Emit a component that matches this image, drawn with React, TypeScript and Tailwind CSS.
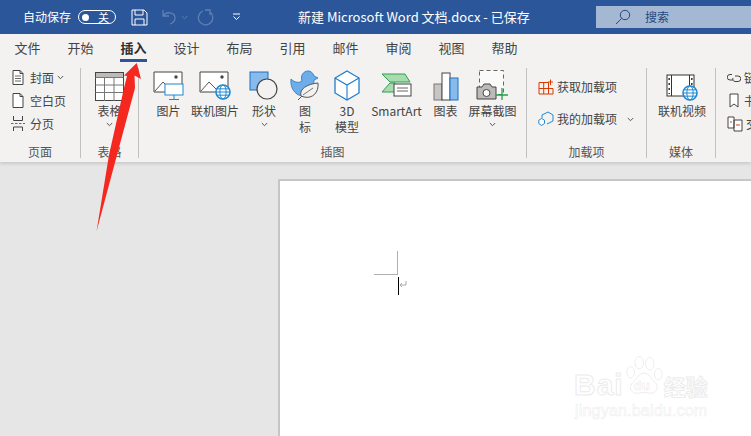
import React from "react";

const font = "[font-family:'Noto_Sans_CJK_SC','Noto_Sans',sans-serif]";

const Chevron = ({ className = "" }: { className?: string }) => (
  <svg width="7" height="5" viewBox="0 0 7 5" className={className}>
    <path d="M0.8 1 L3.5 3.7 L6.2 1" fill="none" stroke="#555" strokeWidth="1" />
  </svg>
);

const Globe = ({ x, y, r }: { x: number; y: number; r: number }) => (
  <g fill="none" stroke="#1e88d2" strokeWidth="1">
    <circle cx={x} cy={y} r={r} fill="#fff" strokeWidth="1.6" />
    <ellipse cx={x} cy={y} rx={r * 0.45} ry={r} />
    <path d={`M${x - r} ${y}H${x + r}M${x - r * 0.85} ${y - r * 0.45}H${x + r * 0.85}M${x - r * 0.85} ${y + r * 0.45}H${x + r * 0.85}`} />
  </g>
);

const Pic = ({ online }: { online?: boolean }) => (
  <svg width="32" height="30" viewBox="0 0 32 30">
    <path d="M1 1H29V21H1Z" fill="#fff" stroke="#444" />
    <path d="M2 20L10 11L17 18" fill="none" stroke="#555" />
    <circle cx="23" cy="6" r="1.7" fill="#444" />
    {online ? (
      <Globe x={24} y={21} r={7} />
    ) : (
      <g>
        <rect x="12" y="13" width="18" height="11" fill="#fff" stroke="#1e88d2" />
        <path d="M21 24V28M16 28.5H26" stroke="#1e88d2" />
      </g>
    )}
  </svg>
);

const Shapes = () => (
  <svg width="30" height="30" viewBox="0 0 30 30">
    <rect x="1" y="1" width="18" height="18" fill="#86bbeb" stroke="#1f6fc0" />
    <circle cx="18" cy="18" r="10" fill="#f3f2f1" stroke="#444" strokeWidth="1.2" />
  </svg>
);

const IconArt = () => (
  <svg width="30" height="31" viewBox="0 0 30 31">
    <path d="M1 9C5 13 9 13 12 11C10 5 14 1 18 1C21 1 23 3 24 6L28 8L24 10C24 14 23 16 21 18L12 26C5 25 0 18 1 9Z" fill="#6cadea" stroke="#3a86cc" />
    <path d="M8 30L15 23" stroke="#555" fill="none" />
    <path d="M11 26C9 19 17 14 28 13C29 22 23 29 14 27Z" fill="#f3f2f1" stroke="#555" />
    <path d="M13 25L23 18" stroke="#777" fill="none" />
  </svg>
);

const Cube = () => (
  <svg width="28" height="31" viewBox="0 0 28 31">
    <path d="M14 1L26 8V23L14 30L2 23V8Z" fill="#fff" stroke="#1e7ccb" strokeWidth="1.3" />
    <path d="M2 8L14 15L26 8M14 15V30" fill="none" stroke="#1e7ccb" strokeWidth="1.1" />
  </svg>
);

const SmartArtIcon = () => (
  <svg width="32" height="28" viewBox="0 0 32 28">
    <path d="M1 1H24L29 9H9Z" fill="#a8dcae" stroke="#2f9e52" />
    <path d="M9 10L1 19H14V10Z" fill="#a8dcae" stroke="#2f9e52" />
    <rect x="13" y="11" width="17" height="12" fill="#fff" stroke="#444" />
    <path d="M16 15H27M16 18H27" stroke="#666" />
  </svg>
);

const ChartIcon = () => (
  <svg width="26" height="29" viewBox="0 0 26 29">
    <rect x="1" y="12" width="8" height="16" fill="#c8c6c4" stroke="#777" />
    <rect x="9" y="1" width="8" height="27" fill="#fff" stroke="#444" />
    <rect x="17" y="6" width="8" height="22" fill="#86bbeb" stroke="#1f6fc0" />
  </svg>
);

const Screenshot = () => (
  <svg width="34" height="31" viewBox="0 0 34 31">
    <rect x="3.5" y="0.5" width="24" height="24" fill="#fafafa" stroke="#666" strokeDasharray="4 3" />
    <path d="M1 17H6L8 14H14L16 17H20V29H1Z" fill="#bdbbb9" stroke="#444" />
    <circle cx="10.5" cy="23" r="3.5" fill="#fff" stroke="#444" />
    <path d="M26 18V30M20 25H32" stroke="#22a04a" strokeWidth="1.3" />
  </svg>
);

const TableIcon = () => (
  <svg width="29" height="29" viewBox="0 0 29 29">
    <rect x="0.5" y="0.5" width="28" height="28" fill="#fff" stroke="#444" />
    <rect x="1" y="1" width="27" height="4" fill="#bdbbb9" />
    <path d="M0.5 5.5H28.5M0.5 13H28.5M0.5 20.5H28.5M9.5 5V29M19 5V29" stroke="#777" fill="none" />
  </svg>
);

const VideoIcon = () => (
  <svg width="32" height="27" viewBox="0 0 32 27">
    <rect x="1" y="1" width="27" height="21" fill="#fff" stroke="#333" />
    <path d="M5.5 1V22M23.5 1V22" stroke="#333" />
    <path d="M3.2 4V6M3.2 9V11M3.2 14V16M3.2 19V20M25.8 4V6M25.8 9V11" stroke="#333" strokeWidth="1.5" />
    <Globe x={24} y={19} r={7} />
  </svg>
);

const SmallPage = ({ lines }: { lines?: boolean }) => (
  <svg width="12" height="15" viewBox="0 0 12 15">
    <path d="M1 .5H8L11 3.5V14.5H1Z" fill="#fff" stroke="#444" />
    <path d="M8 .5V3.5H11" fill="none" stroke="#444" />
    {lines && <path d="M3 6H9M3 8.5H9M3 11H9" stroke="#666" />}
  </svg>
);

const BreakIcon = () => (
  <svg width="14" height="15" viewBox="0 0 14 15">
    <path d="M2.5 0V4.5H11.5V0M2.5 15V11H11.5V15" fill="none" stroke="#444" />
    <path d="M0 7.5H14" stroke="#1e7ccb" strokeDasharray="2.5 1.5" />
  </svg>
);

const Big = ({ w, icon, label, chevron }: { w: number; icon: React.ReactNode; label: React.ReactNode; chevron?: boolean }) => (
  <div className="flex shrink-0 flex-col items-center" style={{ width: w }}>
    <div className="flex h-[33px] items-end justify-center">{icon}</div>
    <div className="mt-[2px] text-center text-[12px] leading-[16px] whitespace-nowrap">{label}</div>
    {chevron && <Chevron className="mt-[3px]" />}
  </div>
);

const Group = ({ w, label, children, last, className = "" }: { w: number; label: string; children: React.ReactNode; last?: boolean; className?: string }) => (
  <div className={`relative flex h-[90px] shrink-0 flex-col ${last ? "" : "border-r border-[#c2c1c0]"}`} style={{ width: w }}>
    <div className={`flex flex-1 ${className}`}>{children}</div>
    <div className="h-[14px] text-center text-[12px] leading-[15px] text-[#555]">{label}</div>
  </div>
);

const Small = ({ icon, label, chevron }: { icon: React.ReactNode; label: string; chevron?: boolean }) => (
  <div className="flex h-[23px] items-center whitespace-nowrap">
    <div className="flex w-[18px] justify-center">{icon}</div>
    <span className="ml-[3px] text-[12px]">{label}</span>
    {chevron && <Chevron className="ml-[3px]" />}
  </div>
);

const tabs = ["文件", "开始", "插入", "设计", "布局", "引用", "邮件", "审阅", "视图", "帮助"];

export default function App() {
  return (
    <div className={`relative h-[436px] w-[751px] overflow-hidden bg-[#e6e6e6] text-[#444] ${font}`}>
      {/* Title bar */}
      <div className="flex h-[34px] items-center bg-[#2b579a] pl-[23px] text-white">
        <span className="w-[48px] text-[12px] whitespace-nowrap">自动保存</span>
        <div className="ml-[7px] flex h-[14px] w-[38px] items-center rounded-full border border-white pl-[3px]">
          <span className="h-[7px] w-[7px] rounded-full bg-white" />
          <span className="ml-[9px] text-[11px] leading-none">关</span>
        </div>
        <svg width="17" height="17" viewBox="0 0 17 17" className="ml-[15px]">
          <path d="M1 1H13L16 4V16H1Z M4 1V6H12V1 M4 16V10H13V16" fill="none" stroke="#fff" />
        </svg>
        <svg width="16" height="16" viewBox="0 0 16 16" className="ml-[13px]">
          <path d="M2 1V7H8M2 7C5 2 14 3 14 9C14 12 12 14 9 15" fill="none" stroke="#5f80b4" strokeWidth="1.3" />
        </svg>
        <svg width="7" height="5" viewBox="0 0 7 5" className="ml-[4px]">
          <path d="M.8 1L3.5 3.7L6.2 1" fill="none" stroke="#5f80b4" />
        </svg>
        <svg width="17" height="17" viewBox="0 0 17 17" className="ml-[9px]">
          <path d="M6 2A7.2 7.2 0 1 0 13 3M8 1H13V6" fill="none" stroke="#5f80b4" strokeWidth="1.3" />
        </svg>
        <svg width="9" height="8" viewBox="0 0 9 8" className="ml-[18px]">
          <path d="M1 1H8M1.5 3.5L4.5 6.5L7.5 3.5" fill="none" stroke="#fff" />
        </svg>
        <span className="ml-[57px] w-[240px] text-[13px] whitespace-nowrap">新建 Microsoft Word 文档.docx - 已保存</span>
        <div className="ml-[58px] flex h-[22px] flex-1 items-center bg-[#a5b8d3] pl-[19px] text-[#23497f]">
          <svg width="16" height="16" viewBox="0 0 16 16">
            <circle cx="10" cy="6" r="4.7" fill="none" stroke="#23497f" />
            <path d="M6.5 9.5L1 15" stroke="#23497f" />
          </svg>
          <span className="ml-[14px] text-[12px]">搜索</span>
        </div>
      </div>

      {/* Tabs */}
      <div className="flex h-[31px] bg-[#f3f2f1] pl-[1px]">
        {tabs.map((t) => (
          <div key={t} className="relative flex w-[53px] justify-center pt-[5px] text-[13px] leading-[18px]">
            <span className={t === "插入" ? "font-semibold text-[#2f2f2f]" : ""}>{t}</span>
            {t === "插入" && <span className="absolute top-[25px] left-[13px] h-[3px] w-[27px] bg-[#2b579a]" />}
          </div>
        ))}
      </div>

      {/* Ribbon */}
      <div className="flex h-[97px] bg-[#f3f2f1] pt-[3px] shadow-[0_2px_3px_rgba(0,0,0,0.12)]">
        <Group w={81} label="页面" className="-mt-[2px] flex-col pl-[9px]">
          <Small icon={<SmallPage lines />} label="封面" chevron />
          <Small icon={<SmallPage />} label="空白页" />
          <Small icon={<BreakIcon />} label="分页" />
        </Group>
        <Group w={58} label="表格">
          <Big w={57} icon={<TableIcon />} label="表格" chevron />
        </Group>
        <Group w={388} label="插图" className="pl-[8px]">
          <Big w={43} icon={<Pic />} label="图片" />
          <Big w={50} icon={<Pic online />} label="联机图片" />
          <Big w={48} icon={<Shapes />} label="形状" chevron />
          <Big w={34} icon={<IconArt />} label={<>图<br />标</>} />
          <Big w={50} icon={<Cube />} label={<>3D<br />模型</>} />
          <Big w={49} icon={<SmartArtIcon />} label="SmartArt" />
          <Big w={49} icon={<ChartIcon />} label="图表" />
          <Big w={45} icon={<Screenshot />} label="屏幕截图" chevron />
        </Group>
        <Group w={120} label="加载项" className="flex-col pt-[9px] pl-[11px]">
          <div className="flex h-[20px] items-center whitespace-nowrap">
            <svg width="16" height="16" viewBox="0 0 16 16">
              <path d="M1 3.5H10.5V15H1ZM1 9.5H15V15H10.5M5.7 3.5V15M12.5 .5V6M10 3H15" fill="none" stroke="#d83b01" />
            </svg>
            <span className="ml-[3px] text-[12px]">获取加载项</span>
          </div>
          <div className="mt-[12px] flex h-[20px] items-center whitespace-nowrap">
            <svg width="16" height="16" viewBox="0 0 16 16">
              <path d="M4 7V4L10 1L15 4V10L9 13" fill="none" stroke="#1e88d2" />
              <path d="M3.5 7.5L6.5 9.2V12.5L3.5 14.5L.8 12.5V9.2Z" fill="#fff" stroke="#1e88d2" />
            </svg>
            <span className="ml-[3px] text-[12px]">我的加载项</span>
            <Chevron className="ml-[10px]" />
          </div>
        </Group>
        <Group w={69} label="媒体" className="pl-[1px]">
          <Big w={68} icon={<VideoIcon />} label="联机视频" />
        </Group>
        <Group w={40} last label="" className="-mt-[2px] flex-col pl-[11px]">
          <Small icon={<svg width="14" height="10" viewBox="0 0 14 10"><path d="M5 1.5H3A2.5 2.5 0 0 0 3 7H6M8 3H11A2.5 2.5 0 0 1 11 8.5H8A2.5 2.5 0 0 1 6 5" fill="none" stroke="#444" /></svg>} label="链" />
          <Small icon={<svg width="10" height="15" viewBox="0 0 10 15"><path d="M1 1H9V14L5 11L1 14Z" fill="#fff" stroke="#444" /></svg>} label="书" />
          <Small icon={<svg width="16" height="16" viewBox="0 0 16 16"><path d="M1 1H7V12H1ZM7 4H15V15H7Z" fill="#fff" stroke="#444" /><path d="M3 6H5M9 9H13" stroke="#e03a3a" /></svg>} label="交" />
        </Group>
      </div>

      {/* Document area */}
      <div className="mt-[17px] ml-[278px] h-[300px] border-t-2 border-l-2 border-[#c6c6c6] bg-white pt-[70px] pl-[94px]">
        <div className="h-[24px] w-[24px] border-r border-b border-[#b0b0b0]" />
        <div className="mt-[2px] ml-[24px] flex">
          <div className="h-[18px] w-px bg-black" />
          <svg width="8" height="8" viewBox="0 0 8 8" className="mt-[4px]">
            <path d="M7 0V4H1M3 2L1 4L3 6" fill="none" stroke="#aaa" />
          </svg>
        </div>
      </div>

      {/* Watermark */}
      <div className="pointer-events-none absolute top-[354px] left-[574px] flex flex-col text-white">
        <div className="flex items-end">
          <span className="text-[30px] leading-[30px] font-bold tracking-[1px] [-webkit-text-stroke:1px_#ececec] [font-family:'Liberation_Sans',sans-serif]">Bai</span>
          <svg width="40" height="46" viewBox="0 0 42 46">
            <g fill="#fff" stroke="#ececec">
              <ellipse cx="7" cy="18" rx="4" ry="6" />
              <ellipse cx="16" cy="8" rx="4.5" ry="6.5" />
              <ellipse cx="27" cy="9" rx="4.5" ry="6.5" />
              <ellipse cx="36" cy="20" rx="4" ry="6" />
              <path d="M21 19C27 19 28 25 33 29C37 33 34 41 27 40C23 39 19 39 15 40C8 41 4 34 9 29C14 25 15 19 21 19Z" />
            </g>
            <text x="10" y="37" fontSize="14" fontWeight="700" fill="#fff" stroke="#ececec" strokeWidth="0.6" fontFamily="Liberation Sans">du</text>
          </svg>
          <span className="text-[22px] leading-[30px] font-bold [-webkit-text-stroke:1px_#ececec]">经验</span>
        </div>
        <span className="mt-[2px] ml-[1px] text-[16px] leading-[18px] tracking-[0.2px] [-webkit-text-stroke:0.6px_#efefef] [font-family:'Liberation_Sans',sans-serif]">jingyan.baidu.com</span>
      </div>

      {/* Red annotation arrow */}
      <svg width="751" height="436" viewBox="0 0 751 436" className="pointer-events-none absolute inset-0">
        <path d="M136.7 63L141 79L134.5 75.5L135 88L117 155L96.5 231.5L109 155L124 88L127 76L124 75.5Z" fill="#f5281f" />
      </svg>
    </div>
  );
}
